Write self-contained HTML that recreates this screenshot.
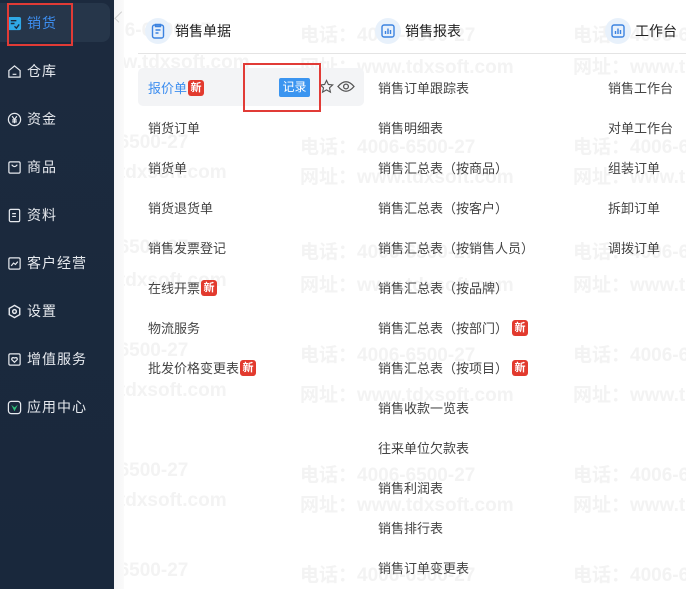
<!DOCTYPE html>
<html><head><meta charset="utf-8"><style>
*{margin:0;padding:0;box-sizing:border-box}
html,body{width:686px;height:589px;overflow:hidden}
body{position:relative;background:#fff;font-family:"Liberation Sans","Noto Sans CJK SC",sans-serif;font-size:13px;color:#333}
.wrap{position:absolute;left:0;top:0;width:686px;height:589px;overflow:hidden}
.sb{position:absolute;left:0;top:0;width:114px;height:589px;background:linear-gradient(#1c2a3e,#19283c)}
.act{position:absolute;left:0;top:3px;width:110px;height:39px;background:#26364a;border-radius:0 8px 8px 0}
.si{position:absolute;left:7px;color:#e6e9ee;font-size:14px;display:flex;align-items:center;gap:5px;letter-spacing:1px}
.si svg{width:15px;height:15px}
.shadow{position:absolute;left:114px;top:0;width:10px;height:589px;background:linear-gradient(90deg,#f4f4f6,#fafafa)}
.wm{position:absolute;color:#f3f3f3;font-weight:bold;font-size:19px;white-space:nowrap}
.hd{position:absolute;top:18px;display:flex;align-items:center;font-size:14px;color:#222}
.hd .c{width:26px;height:26px;border-radius:50%;background:#e8f1fb;display:flex;align-items:center;justify-content:center;margin-right:4px}
.line{position:absolute;left:138px;top:53px;width:548px;height:1px;background:#e4e4e4}
.it{position:absolute;font-size:13px;color:#444;white-space:nowrap;display:flex;align-items:center}
.new{display:inline-block;background:#e23a2e;color:#fff;font-size:11px;width:16px;height:16px;line-height:16px;text-align:center;border-radius:3px;margin-left:1px;font-weight:bold}
.row{position:absolute;left:138px;top:68px;width:226px;height:38px;background:#f3f4f6;border-radius:5px}
.red{position:absolute;border:2px solid #e13b36}
</style></head><body><div class="wrap">
<div class="wm" style="left:93px;top:20px">4006-6500-27</div>
<div class="wm" style="left:300px;top:20px">电话：4006-6500-27</div>
<div class="wm" style="left:573px;top:20px">电话：4006-6500-27</div>
<div class="wm" style="left:93px;top:52px">www.tdxsoft.com</div>
<div class="wm" style="left:300px;top:52px">网址：www.tdxsoft.com</div>
<div class="wm" style="left:573px;top:52px">网址：www.tdxsoft.com</div>
<div class="wm" style="left:70px;top:132px">4006-6500-27</div>
<div class="wm" style="left:300px;top:132px">电话：4006-6500-27</div>
<div class="wm" style="left:573px;top:132px">电话：4006-6500-27</div>
<div class="wm" style="left:70px;top:162px">www.tdxsoft.com</div>
<div class="wm" style="left:300px;top:162px">网址：www.tdxsoft.com</div>
<div class="wm" style="left:573px;top:162px">网址：www.tdxsoft.com</div>
<div class="wm" style="left:70px;top:237px">4006-6500-27</div>
<div class="wm" style="left:300px;top:237px">电话：4006-6500-27</div>
<div class="wm" style="left:573px;top:237px">电话：4006-6500-27</div>
<div class="wm" style="left:70px;top:270px">www.tdxsoft.com</div>
<div class="wm" style="left:300px;top:270px">网址：www.tdxsoft.com</div>
<div class="wm" style="left:573px;top:270px">网址：www.tdxsoft.com</div>
<div class="wm" style="left:70px;top:340px">4006-6500-27</div>
<div class="wm" style="left:300px;top:340px">电话：4006-6500-27</div>
<div class="wm" style="left:573px;top:340px">电话：4006-6500-27</div>
<div class="wm" style="left:70px;top:380px">www.tdxsoft.com</div>
<div class="wm" style="left:300px;top:380px">网址：www.tdxsoft.com</div>
<div class="wm" style="left:573px;top:380px">网址：www.tdxsoft.com</div>
<div class="wm" style="left:70px;top:460px">4006-6500-27</div>
<div class="wm" style="left:300px;top:460px">电话：4006-6500-27</div>
<div class="wm" style="left:573px;top:460px">电话：4006-6500-27</div>
<div class="wm" style="left:70px;top:490px">www.tdxsoft.com</div>
<div class="wm" style="left:300px;top:490px">网址：www.tdxsoft.com</div>
<div class="wm" style="left:573px;top:490px">网址：www.tdxsoft.com</div>
<div class="wm" style="left:70px;top:560px">4006-6500-27</div>
<div class="wm" style="left:300px;top:560px">电话：4006-6500-27</div>
<div class="wm" style="left:573px;top:560px">电话：4006-6500-27</div>

<div class="shadow"></div>
<div class="sb">
<div class="act"></div>
<div class="si" style="top:13px;color:#3d8ef0"><svg viewBox="0 0 16 16"><rect x="1" y="1" width="14" height="14" rx="2" fill="#2fa8e6"/><path d="M4 5h6M4 8h4M8 11l2 2 3-4" stroke="#1c2a3e" stroke-width="1.5" fill="none"/></svg>销货</div>
<div class="si" style="top:61px"><svg viewBox="0 0 16 16" fill="none" stroke="#e6e9ee" stroke-width="1.3"><path d="M2 7l6-5 6 5v7H2z M6 11h4"/></svg>仓库</div>
<div class="si" style="top:109px"><svg viewBox="0 0 16 16" fill="none" stroke="#e6e9ee" stroke-width="1.3"><circle cx="8" cy="8" r="6.5"/><path d="M5.5 4.5L8 8l2.5-3.5M8 8v4M5.5 8.5h5M5.5 10.5h5"/></svg>资金</div>
<div class="si" style="top:157px"><svg viewBox="0 0 16 16" fill="none" stroke="#e6e9ee" stroke-width="1.3"><rect x="2" y="2" width="12" height="12" rx="1.5"/><path d="M5 5q3 4 6 0"/></svg>商品</div>
<div class="si" style="top:205px"><svg viewBox="0 0 16 16" fill="none" stroke="#e6e9ee" stroke-width="1.3"><rect x="2.5" y="1.5" width="11" height="13" rx="1.5"/><path d="M5.5 6h4M5.5 9h4"/></svg>资料</div>
<div class="si" style="top:253px"><svg viewBox="0 0 16 16" fill="none" stroke="#e6e9ee" stroke-width="1.3"><rect x="2" y="2" width="12" height="12" rx="1.5"/><path d="M4.5 10.5l2.5-3 2 1.5 2.5-3"/></svg>客户经营</div>
<div class="si" style="top:301px"><svg viewBox="0 0 16 16" fill="none" stroke="#e6e9ee" stroke-width="1.5"><path d="M8 1.5l5.6 3.25v6.5L8 14.5l-5.6-3.25v-6.5z"/><circle cx="8" cy="8" r="2"/></svg>设置</div>
<div class="si" style="top:349px"><svg viewBox="0 0 16 16" fill="none" stroke="#e6e9ee" stroke-width="1.3"><rect x="2" y="2" width="12" height="12" rx="1.5"/><path d="M8 11L5 8q0-2 1.5-2T8 7q0-1 1.5-1T11 8z"/></svg>增值服务</div>
<div class="si" style="top:397px"><svg viewBox="0 0 16 16"><rect x="1.5" y="1.5" width="13" height="13" rx="3" fill="none" stroke="#e6e9ee" stroke-width="1.3"/><path d="M4.5 5l3.5 7 3.5-7-3.5 3z" fill="#2fc27a"/></svg>应用中心</div>
</div>
<div style="position:absolute;left:117px;top:12px;width:6px;height:10px;border-left:1.5px solid #ccc;border-bottom:1.5px solid #ccc;transform:rotate(45deg)"></div>

<div class="hd" style="left:145px"><div class="c"><svg width="14" height="16" viewBox="0 0 14 16" fill="none" stroke="#3b82e0" stroke-width="1.4"><rect x="1.5" y="2" width="11" height="13" rx="2"/><path d="M4.5 1.5h5v2h-5zM4.5 7h5M4.5 10h3"/></svg></div>销售单据</div>
<div class="hd" style="left:375px"><div class="c"><svg width="14" height="14" viewBox="0 0 14 14"><rect x="1" y="1" width="12" height="12" rx="2" fill="none" stroke="#3b82e0" stroke-width="1.4"/><path d="M4.5 10V7M7 10V4.5M9.5 10V6" stroke="#3b82e0" stroke-width="1.4"/></svg></div>销售报表</div>
<div class="hd" style="left:605px"><div class="c"><svg width="14" height="14" viewBox="0 0 14 14"><rect x="1" y="1" width="12" height="12" rx="2" fill="none" stroke="#3b82e0" stroke-width="1.4"/><path d="M4.5 10V7M7 10V4.5M9.5 10V6" stroke="#3b82e0" stroke-width="1.4"/></svg></div>工作台</div>
<div class="line"></div>

<div class="row"></div>
<div class="it" style="left:148px;top:78px;color:#3d8ef0">报价单<span class="new">新</span></div>
<div style="position:absolute;left:279px;top:78px;width:31px;height:19px;background:#3b95f0;color:#fff;font-size:12px;line-height:19px;text-align:center;border-radius:2px">记录</div>
<svg style="position:absolute;left:319px;top:79px" width="15" height="15" viewBox="0 0 16 16"><path d="M8 1.5l2 4.3 4.6.5-3.4 3.1 1 4.6L8 11.6 3.8 14l1-4.6L1.4 6.3 6 5.8z" fill="none" stroke="#555" stroke-width="1.2"/></svg>
<svg style="position:absolute;left:337px;top:79px" width="18" height="15" viewBox="0 0 18 15"><path d="M1 7.5Q9-2 17 7.5Q9 17 1 7.5z" fill="none" stroke="#555" stroke-width="1.3"/><circle cx="9" cy="7.5" r="2.4" fill="none" stroke="#555" stroke-width="1.3"/></svg>

<div class="it" style="left:148px;top:118px">销货订单</div>
<div class="it" style="left:148px;top:158px">销货单</div>
<div class="it" style="left:148px;top:198px">销货退货单</div>
<div class="it" style="left:148px;top:238px">销售发票登记</div>
<div class="it" style="left:148px;top:278px">在线开票<span class="new">新</span></div>
<div class="it" style="left:148px;top:318px">物流服务</div>
<div class="it" style="left:148px;top:358px">批发价格变更表<span class="new">新</span></div>

<div class="it" style="left:378px;top:78px">销售订单跟踪表</div>
<div class="it" style="left:378px;top:118px">销售明细表</div>
<div class="it" style="left:378px;top:158px">销售汇总表（按商品）</div>
<div class="it" style="left:378px;top:198px">销售汇总表（按客户）</div>
<div class="it" style="left:378px;top:238px">销售汇总表（按销售人员）</div>
<div class="it" style="left:378px;top:278px">销售汇总表（按品牌）</div>
<div class="it" style="left:378px;top:318px">销售汇总表（按部门）<span class="new" style="margin-left:4px">新</span></div>
<div class="it" style="left:378px;top:358px">销售汇总表（按项目）<span class="new" style="margin-left:4px">新</span></div>
<div class="it" style="left:378px;top:398px">销售收款一览表</div>
<div class="it" style="left:378px;top:438px">往来单位欠款表</div>
<div class="it" style="left:378px;top:478px">销售利润表</div>
<div class="it" style="left:378px;top:518px">销售排行表</div>
<div class="it" style="left:378px;top:558px">销售订单变更表</div>

<div class="it" style="left:608px;top:78px">销售工作台</div>
<div class="it" style="left:608px;top:118px">对单工作台</div>
<div class="it" style="left:608px;top:158px">组装订单</div>
<div class="it" style="left:608px;top:198px">拆卸订单</div>
<div class="it" style="left:608px;top:238px">调拨订单</div>

<div class="red" style="left:7px;top:3px;width:66px;height:43px"></div>
<div class="red" style="left:243px;top:63px;width:78px;height:49px"></div>
</div></body></html>
